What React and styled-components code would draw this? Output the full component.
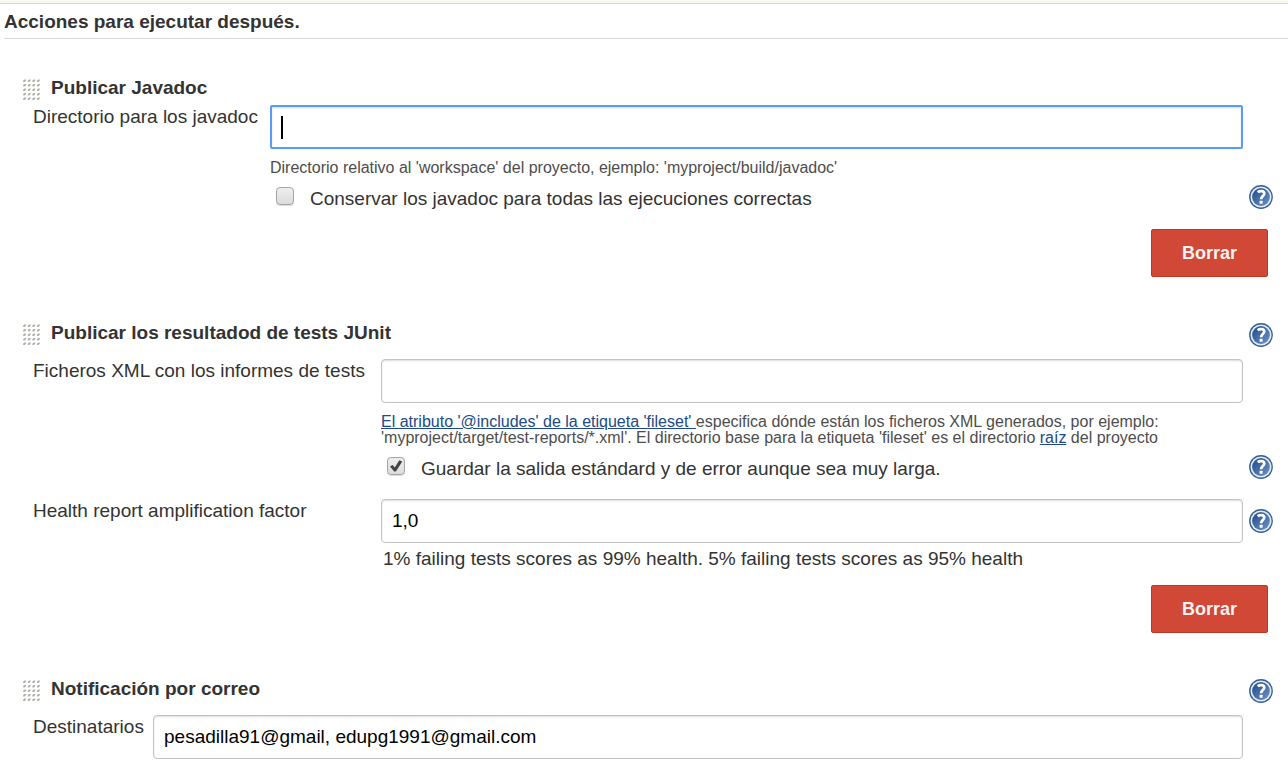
import React from "react";
import styled, { createGlobalStyle, css } from "styled-components";

const Global = createGlobalStyle`
  *, *::before, *::after { box-sizing: border-box; }
  body {
    margin: 0;
    background: #fff;
    color: #333;
    font-family: "Liberation Sans", Arial, Helvetica, sans-serif;
    font-size: 19px;
    line-height: 24px;
  }
`;

const TopBar = styled.div`
  height: 4px;
  background: #f6faf2;
  border-bottom: 1px solid #d3d7cf;
`;

const PageTitle = styled.h1`
  margin: 0 0 0 4px;
  padding: 6px 0 4px;
  border-bottom: 1px solid #d8d8d8;
  font-size: 19px;
  line-height: 24px;
`;

const Form = styled.form`
  padding: 37px 15px 9px 23px;
  display: flex;
  flex-direction: column;
  gap: 44px;
`;

const Section = styled.section`
  display: flex;
  flex-direction: column;
`;

const SectionHeader = styled.header`
  display: flex;
  align-items: flex-start;
  height: 24px;
  margin-bottom: ${(p) => (p.$tight ? 5 : 14)}px;
`;

const SectionTitle = styled.h2`
  flex: 1;
  margin: 0 0 0 10px;
  font-size: 19px;
  line-height: 24px;
`;

const GripSvg = styled.svg`
  display: block;
  flex: none;
  margin-top: 3px;
`;

const Fields = styled.div`
  display: grid;
  grid-template-columns: minmax(max-content, ${(p) => p.$label}px) minmax(0, 1fr) 24px;
  column-gap: 6px;
  padding-left: 10px;
`;

const FieldLabel = styled.label`
  grid-column: 1;
  line-height: 24px;
`;

const Input = styled.input`
  grid-column: 2;
  width: 100%;
  height: 44px;
  padding: 0 10px;
  border: 1px solid #c3c3c3;
  border-radius: 4px;
  outline: 0;
  background: #fff;
  box-shadow: inset 0 1px 2px rgba(0, 0, 0, 0.14);
  color: #000;
  font: inherit;
  ${(p) =>
    p.$active &&
    css`
      border: 2px solid #5b9bf8;
      border-radius: 2px;
      caret-color: transparent;
      background: linear-gradient(#000, #000) 9px 9px / 2px 23px no-repeat #fff;
    `}
`;

const Hint = styled.p`
  grid-column: 2 / 4;
  margin: 11px 0 0;
  color: #4d4d4d;
  font-size: 16px;
  line-height: 16px;
`;

const Link = styled.a`
  color: #204a87;
`;

const CheckRow = styled.div`
  grid-column: 2;
  display: flex;
  align-items: flex-start;
  gap: 16px;
  margin: 9px 0 16px;
  padding-left: 6px;
  line-height: 28px;
`;

const Checkbox = styled.input`
  appearance: none;
  flex: none;
  width: 18px;
  height: 18px;
  margin: 2px 0 0;
  border: 1px solid #a5a5a5;
  border-radius: 4px;
  background: linear-gradient(#eee, #dcdcdc);
  box-shadow: 0 1px 1px rgba(0, 0, 0, 0.15);
  &:checked {
    background:
      url("data:image/svg+xml,%3Csvg xmlns='http://www.w3.org/2000/svg' viewBox='0 0 16 16'%3E%3Cpath d='M2 8.6 4.600 7l2.200 2.400L11.300 2.300l3 1.300L7.900 13.500H6.200z' fill='%23444'/%3E%3C/svg%3E"),
      linear-gradient(#eee, #dcdcdc);
  }
`;

const Note = styled.p`
  grid-column: 2;
  margin: 4px 0 0 2px;
`;

const HelpButton = styled.button`
  grid-column: 3;
  flex: none;
  align-self: ${(p) => (p.$center ? "center" : "start")};
  width: 24px;
  height: 24px;
  margin-top: ${(p) => p.$top || 0}px;
  padding: 0;
  border: 0;
  background: none;
  cursor: pointer;
  svg { display: block; }
`;

const Actions = styled.div`
  display: flex;
  justify-content: flex-end;
  padding-right: 5px;
  margin-top: ${(p) => p.$top || 0}px;
`;

const DeleteButton = styled.button`
  height: 48px;
  padding: 0 30px;
  border: 1px solid #bf3727;
  border-radius: 2px;
  background: #d14836;
  color: #f2f2f2;
  font: bold 18px/24px "Liberation Sans", Arial, sans-serif;
  cursor: pointer;
`;

function Grip() {
  const dots = [];
  for (let r = 0; r < 5; r++)
    for (let c = 0; c < 4; c++) {
      const x = c * 4.6 + 0.2;
      const y = r * 4.5 + 0.4;
      dots.push(
        <path key={`${r}-${c}`} d={`M${x} ${y + 2.6}V${y + 1.2}L${x + 1.2} ${y}H${x + 2.9}V${y + 1.2}L${x + 1.6} ${y + 2.6}Z`} />
      );
    }
  return (
    <GripSvg width="18" height="22" viewBox="0 0 18 22" fill="#b0afa8" aria-hidden="true">
      {dots}
    </GripSvg>
  );
}

function Help(props) {
  return (
    <HelpButton type="button" aria-label="Ayuda" {...props}>
      <svg width="24" height="24" viewBox="0 0 24 24" fill="none">
        <defs>
          <linearGradient id="helpFill" x1="0" y1="0" x2="1" y2="1">
            <stop offset="0" stopColor="#204a87" />
            <stop offset="1" stopColor="#6d94c8" />
          </linearGradient>
        </defs>
        <circle cx="12" cy="12" r="11.9" fill="#34609e" />
        <circle cx="12" cy="12" r="10.5" fill="#e6edf6" />
        <circle cx="12" cy="12" r="8.9" fill="url(#helpFill)" />
        <path d="M8.7 7.2C10.3 5.700 15.300 5.300 15.300 8.600C15.300 11 12.100 11.200 12.100 14.300" stroke="#fff" strokeWidth="2.7" />
        <rect x="10.600" y="15.800" width="3" height="3" rx="0.500" fill="#fff" />
      </svg>
    </HelpButton>
  );
}

function Header({ title, help, tight }) {
  return (
    <SectionHeader $tight={tight}>
      <Grip />
      <SectionTitle>{title}</SectionTitle>
      {help && <Help $top={2} />}
    </SectionHeader>
  );
}

function CheckField({ id, label, checked }) {
  return (
    <>
      <CheckRow>
        <Checkbox id={id} type="checkbox" defaultChecked={checked} />
        <label htmlFor={id}>{label}</label>
      </CheckRow>
      <Help $top={9} />
    </>
  );
}

export default function App() {
  return (
    <>
      <Global />
      <TopBar />
      <PageTitle>Acciones para ejecutar después.</PageTitle>
      <Form>
        <Section>
          <Header title="Publicar Javadoc" tight />
          <Fields $label={231}>
            <FieldLabel htmlFor="javadoc">Directorio para los javadoc</FieldLabel>
            <Input id="javadoc" type="text" $active />
            <Hint>Directorio relativo al 'workspace' del proyecto, ejemplo: 'myproject/build/javadoc'</Hint>
            <CheckField id="keep-javadoc" label="Conservar los javadoc para todas las ejecuciones correctas" />
          </Fields>
          <Actions>
            <DeleteButton type="button">Borrar</DeleteButton>
          </Actions>
        </Section>

        <Section>
          <Header title="Publicar los resultadod de tests JUnit" help />
          <Fields $label={342}>
            <FieldLabel htmlFor="xml">Ficheros XML con los informes de tests</FieldLabel>
            <Input id="xml" type="text" />
            <Hint>
              <Link href="#fileset">El atributo '@includes' de la etiqueta 'fileset' </Link>
              especifica dónde están los ficheros XML generados, por ejemplo:
              <br />
              'myproject/target/test-reports/*.xml'. El directorio base para la etiqueta 'fileset' es el directorio{" "}
              <Link href="#workspace">raíz</Link> del proyecto
            </Hint>
            <CheckField id="keep-output" label="Guardar la salida estándard y de error aunque sea muy larga." checked />
            <FieldLabel htmlFor="factor">Health report amplification factor</FieldLabel>
            <Input id="factor" type="text" defaultValue="1,0" />
            <Help $center />
            <Note>1% failing tests scores as 99% health. 5% failing tests scores as 95% health</Note>
          </Fields>
          <Actions $top={14}>
            <DeleteButton type="button">Borrar</DeleteButton>
          </Actions>
        </Section>

        <Section>
          <Header title="Notificación por correo" help />
          <Fields $label={114}>
            <FieldLabel htmlFor="recipients">Destinatarios</FieldLabel>
            <Input id="recipients" type="text" defaultValue="pesadilla91@gmail, edupg1991@gmail.com" />
          </Fields>
        </Section>
      </Form>
    </>
  );
}
